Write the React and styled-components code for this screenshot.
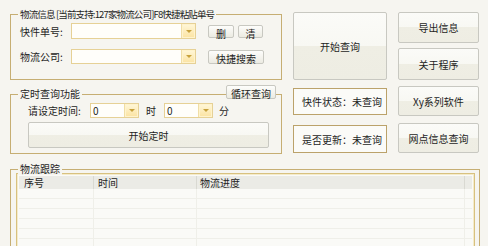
import React from "react";
import styled, { createGlobalStyle } from "styled-components";

const GlobalStyle = createGlobalStyle`
  html, body {
    margin: 0;
    padding: 0;
    background: #f6f5f0;
  }
  body {
    font-family: "Noto Sans CJK SC", "Liberation Sans", sans-serif;
    font-size: 10px;
    color: #1e1e1e;
  }
`;

const Window = styled.div`
  width: 488px;
  height: 246px;
  overflow: hidden;
  padding-left: 10px;
  box-sizing: border-box;
`;

const Top = styled.div`
  display: flex;
  gap: 11px;
  align-items: flex-start;
`;

const Column = styled.div`
  width: ${props => props.$w}px;
  margin-top: ${props => props.$top}px;
  display: flex;
  flex-direction: column;
`;

const Group = styled.div`
  position: relative;
  box-sizing: border-box;
  width: ${props => (props.$w ? `${props.$w}px` : "auto")};
  height: ${props => props.$h}px;
  margin-top: ${props => props.$mt || 0}px;
  border: 1px solid #c6ae73;
  padding: ${props => props.$pad};
  display: flex;
  flex-direction: column;
`;

const Caption = styled.span`
  position: absolute;
  top: -7px;
  left: 7px;
  padding: 0 2px;
  line-height: 12px;
  background: #f6f5f0;
  white-space: nowrap;
  font-size: ${props => (props.$tight ? "9.5px" : "10px")};
  letter-spacing: ${props => (props.$tight ? "-0.85px" : "0")};
`;

const Row = styled.div`
  display: flex;
  align-items: center;
  height: ${props => props.$h}px;
  margin-top: ${props => props.$mt || 0}px;
`;

const Label = styled.span`
  width: ${props => props.$w}px;
  flex: none;
  white-space: nowrap;
`;

const ComboBox = styled.div`
  width: ${props => props.$w}px;
  height: 100%;
  box-sizing: border-box;
  flex: none;
  display: flex;
  border: 1px solid #e6d196;
  background: #fffefa;
`;

const ComboText = styled.span`
  flex: 1;
  padding-left: 2px;
  line-height: 13px;
`;

const ComboArrow = styled.span`
  width: 13px;
  display: flex;
  align-items: center;
  justify-content: center;
  border-left: 1px solid #f0dea6;
  background: linear-gradient(#fff7da, #fbe3a1);
  box-shadow: inset 0 0 0 1px #fff3cc;

  &::after {
    content: "";
    border-left: 3px solid transparent;
    border-right: 3px solid transparent;
    border-top: 3px solid #c8a23c;
  }
`;

const Button = styled.button`
  box-sizing: border-box;
  width: ${props => (props.$w ? `${props.$w}px` : "100%")};
  height: ${props => props.$h}px;
  margin: 0;
  margin-left: ${props => props.$ml || 0}px;
  margin-top: ${props => props.$mt || 0}px;
  padding: 0;
  flex: none;
  font: inherit;
  color: #1e1e1e;
  border: 1px solid #c8c8c1;
  border-radius: 2px;
  background: ${props =>
    props.$split
      ? "linear-gradient(#fbfbf8 0%, #f8f8f3 50%, #efeee4 50%, #eeede3 100%)"
      : "linear-gradient(#fdfdfb, #ecebe2)"};
  white-space: nowrap;
`;

const LoopButton = styled(Button)`
  position: absolute;
  top: -10px;
  right: 5px;
`;

const Status = styled.div`
  box-sizing: border-box;
  height: ${props => props.$h}px;
  margin-top: ${props => props.$mt || 0}px;
  border: 1px solid #bba26a;
  background: #fbfbf8;
  display: flex;
  align-items: center;
  padding-left: 8px;
  white-space: nowrap;
`;

const Unit = styled.span`
  margin: 0 ${props => props.$mr}px 0 ${props => props.$ml}px;
`;

const ListView = styled.div`
  flex: 1;
  border: 1px solid #d8c17f;
  box-shadow: inset 0 0 0 1px #f4ebcb;
  padding: 2px 2px 0 2px;
  background: #fafaf7;
`;

const HeaderRow = styled.div`
  display: flex;
  height: 13px;
  background: #ebebe6;
  line-height: 13px;
`;

const DataRow = styled.div`
  display: flex;
  height: 10px;
  box-sizing: border-box;
  border-bottom: 1px solid #efefe9;
`;

const Cell = styled.div`
  box-sizing: border-box;
  width: ${props => (props.$w ? `${props.$w}px` : "auto")};
  flex: ${props => (props.$w ? "none" : 1)};
  padding-left: ${props => props.$pl}px;
  border-left: ${props => (props.$first ? "none" : `1px solid ${props.$line}`)};
  white-space: nowrap;
`;

const columns = [
  { title: "序号", w: 74, pl: 5 },
  { title: "时间", w: 103, pl: 4 },
  { title: "物流进度", w: 268, pl: 3 },
  { title: "", pl: 0 }
];

const Combo = ({ w, value }) => (
  <ComboBox $w={w}>
    <ComboText>{value}</ComboText>
    <ComboArrow />
  </ComboBox>
);

export default function App() {
  return (
    <Window>
      <GlobalStyle />
      <Top>
        <Column $w={272} $top={14}>
          <Group $h={66} $pad="8px 0 0 9px">
            <Caption $tight>物流信息 [当前支持:127家物流公司]F8快捷粘贴单号</Caption>
            <Row $h={16}>
              <Label $w={51}>快件单号:</Label>
              <Combo w={125} />
              <Button $w={26} $h={13} $ml={12}>删</Button>
              <Button $w={25} $h={13} $ml={4}>清</Button>
            </Row>
            <Row $h={15} $mt={10}>
              <Label $w={51}>物流公司:</Label>
              <Combo w={125} />
              <Button $w={56} $h={14} $ml={12}>快捷搜索</Button>
            </Row>
          </Group>
          <Group $h={60} $mt={14} $pad="8px 0 0 17px">
            <Caption>定时查询功能</Caption>
            <LoopButton $w={50} $h={14}>循环查询</LoopButton>
            <Row $h={15}>
              <Label $w={62}>请设定时间:</Label>
              <Combo w={49} value="0" />
              <Unit $ml={7} $mr={8}>时</Unit>
              <Combo w={49} value="0" />
              <Unit $ml={6} $mr={0}>分</Unit>
            </Row>
            <Button $w={241} $h={26} $mt={4} $split>开始定时</Button>
          </Group>
        </Column>
        <Column $w={94} $top={12}>
          <Button $h={68} $split>开始查询</Button>
          <Status $h={27} $mt={8}>快件状态：未查询</Status>
          <Status $h={28} $mt={10}>是否更新：未查询</Status>
        </Column>
        <Column $w={81} $top={12}>
          <Button $h={31} $split>导出信息</Button>
          <Button $h={32} $mt={5} $split>关于程序</Button>
          <Button $h={30} $mt={6} $split>Xy系列软件</Button>
          <Button $h={30} $mt={7} $split>网点信息查询</Button>
        </Column>
      </Top>
      <Group $w={470} $h={92} $mt={15} $pad="3px 4px 0 5px">
        <Caption>物流跟踪</Caption>
        <ListView>
          <HeaderRow>
            {columns.map((c, i) => (
              <Cell key={i} $w={c.w} $pl={c.pl} $first={i === 0} $line="#d9d9d2">
                {c.title}
              </Cell>
            ))}
          </HeaderRow>
          {[0, 1, 2, 3, 4, 5, 6].map(r => (
            <DataRow key={r}>
              {columns.map((c, i) => (
                <Cell key={i} $w={c.w} $pl={c.pl} $first={i === 0} $line="#efefe9" />
              ))}
            </DataRow>
          ))}
        </ListView>
      </Group>
    </Window>
  );
}
